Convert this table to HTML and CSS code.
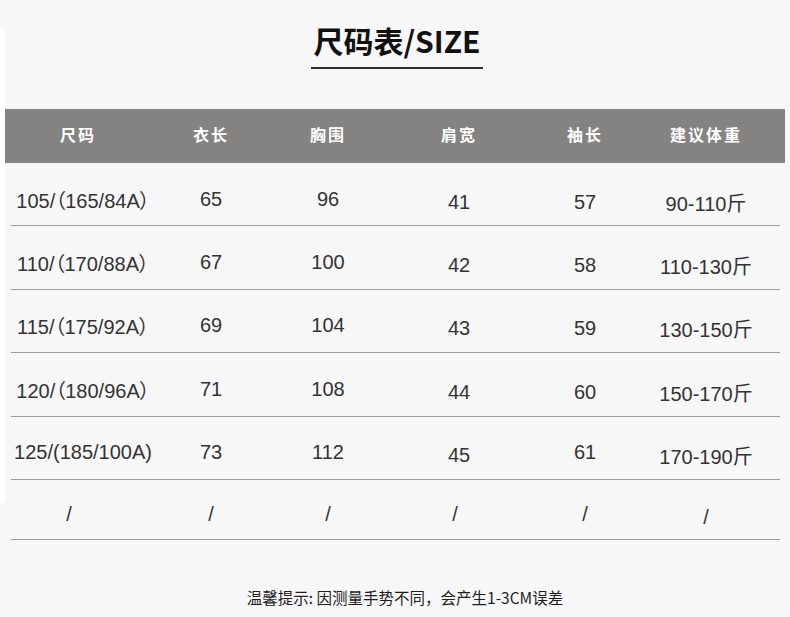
FILE: index.html
```html
<!DOCTYPE html>
<html lang="zh">
<head>
<meta charset="utf-8">
<title>尺码表/SIZE</title>
<link rel="stylesheet" href="styles.css">
</head>
<body>
<div class="page">
  <div class="title-wrap">
    <h1 class="title">尺码表/SIZE</h1>
  </div>
  <div class="table">
    <div class="head">
      <div class="hcell first">尺码</div>
      <div class="hcell">衣长</div>
      <div class="hcell">胸围</div>
      <div class="hcell">肩宽</div>
      <div class="hcell">袖长</div>
      <div class="hcell">建议体重</div>
    </div>
    <div class="row">
      <div class="cell size">105/（165/84A）</div>
      <div class="cell">65</div>
      <div class="cell">96</div>
      <div class="cell low">41</div>
      <div class="cell low">57</div>
      <div class="cell low">90-110斤</div>
    </div>
    <div class="row">
      <div class="cell size">110/（170/88A）</div>
      <div class="cell">67</div>
      <div class="cell">100</div>
      <div class="cell low">42</div>
      <div class="cell low">58</div>
      <div class="cell low">110-130斤</div>
    </div>
    <div class="row">
      <div class="cell size">115/（175/92A）</div>
      <div class="cell">69</div>
      <div class="cell">104</div>
      <div class="cell low">43</div>
      <div class="cell low">59</div>
      <div class="cell low">130-150斤</div>
    </div>
    <div class="row">
      <div class="cell size">120/（180/96A）</div>
      <div class="cell">71</div>
      <div class="cell">108</div>
      <div class="cell low">44</div>
      <div class="cell low">60</div>
      <div class="cell low">150-170斤</div>
    </div>
    <div class="row">
      <div class="cell size">125/(185/100A)</div>
      <div class="cell">73</div>
      <div class="cell">112</div>
      <div class="cell low">45</div>
      <div class="cell">61</div>
      <div class="cell low">170-190斤</div>
    </div>
    <div class="row last">
      <div class="cell slash-first">/</div>
      <div class="cell">/</div>
      <div class="cell">/</div>
      <div class="cell slash-mid">/</div>
      <div class="cell">/</div>
      <div class="cell low">/</div>
    </div>
  </div>
  <p class="note">温馨提示: 因测量手势不同，会产生1-3CM误差</p>
</div>
</body>
</html>
```
FILE: styles.css
```css
html, body {
  margin: 0;
  padding: 0;
}
body {
  width: 790px;
  height: 617px;
  overflow: hidden;
  background: linear-gradient(#ffffff, #ffffff) 0 28px / 5px 475px no-repeat, #f7f7f7;
  font-family: "Liberation Sans", "Noto Sans CJK SC", sans-serif;
  color: #333;
}
.page {
  display: flex;
  flex-direction: column;
}
.title-wrap {
  display: flex;
  justify-content: center;
  padding-top: 22px;
  height: 109px;
  box-sizing: border-box;
}
.title {
  margin: 0;
  height: 47px;
  width: 172px;
  box-sizing: border-box;
  border-bottom: 2px solid #2e2e2e;
  font-family: "Noto Sans CJK SC", sans-serif;
  font-weight: 700;
  font-size: 30px;
  line-height: 36px;
  text-align: center;
  color: #111;
  letter-spacing: 0;
  margin-left: 4px;
}
.table {
  display: flex;
  flex-direction: column;
}
.head, .row {
  display: grid;
  grid-template-columns: 144px 112px 122px 140px 112px 130px 1fr;
  align-items: center;
}
.head {
  margin: 0 5px;
  padding-left: 6px;
  height: 54px;
  background: #858282;
  color: #fff;
}
.hcell {
  font-family: "Noto Sans CJK SC", sans-serif;
  font-weight: 700;
  font-size: 16px;
  letter-spacing: 2px;
  text-align: center;
  padding-bottom: 4px;
}
.hcell.first {
  padding-right: 10px;
}
.row {
  margin: 0 10px 0 11px;
  height: 63.4px;
  box-sizing: border-box;
  border-bottom: 1px solid #9c9c9c;
}
.row.last {
  height: 60px;
}
.cell {
  font-size: 20px;
  text-align: center;
  padding-top: 10px;
  white-space: nowrap;
}
.cell.size {
  font-feature-settings: "palt" 1;
}
.cell.low {
  padding-top: 16px;
}
.cell.slash-first {
  padding-right: 28px;
}
.cell.slash-mid {
  padding-right: 8px;
}
.note {
  margin: 46px 0 0;
  text-align: center;
  font-family: "Noto Sans CJK SC", sans-serif;
  font-size: 15.5px;
  color: #1e1e1e;
  padding-left: 20px;
}
```
